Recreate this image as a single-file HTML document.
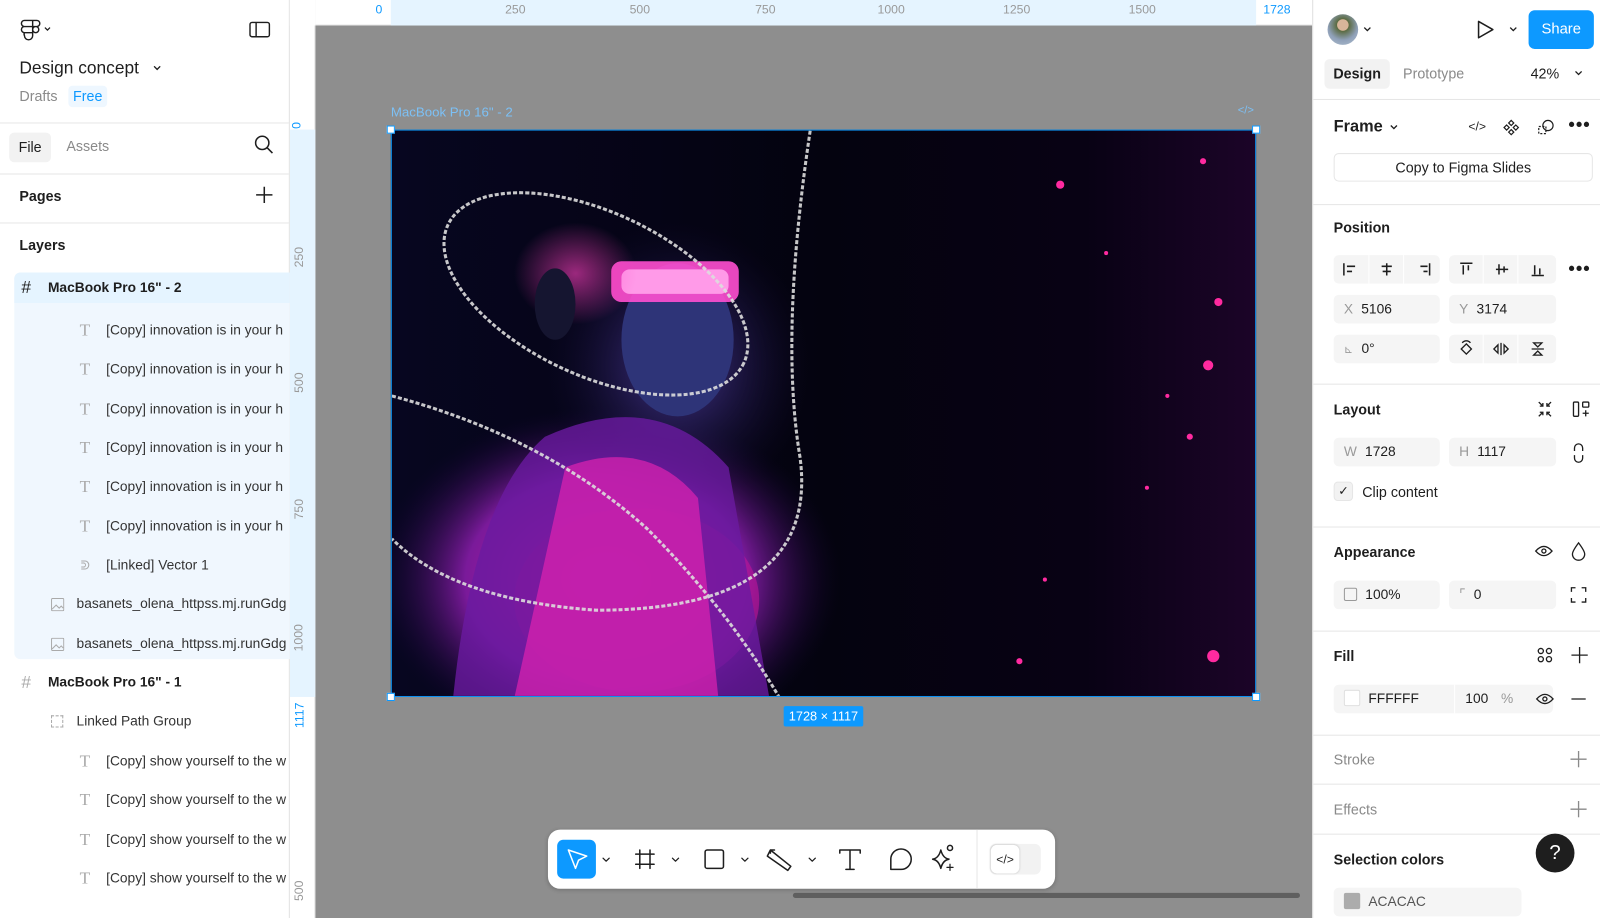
<!DOCTYPE html>
<html><head><meta charset="utf-8"><style>
*{box-sizing:border-box;margin:0;padding:0}
body{width:1600px;height:900px;overflow:hidden;font-family:"Liberation Sans",sans-serif;font-size:13px;color:#1e1e1e;background:#8e8e8e;position:relative}
#root{position:absolute;left:0;top:0;width:1568px;height:882px;transform:scale(1.020408);transform-origin:0 0}
.abs{position:absolute}
#left{left:0;top:0;width:284px;height:900px;background:#fff;border-right:1px solid #e6e6e6}
#right{left:1286px;top:0;width:314px;height:900px;background:#fff;border-left:1px solid #e6e6e6}
.hr{position:absolute;left:0;right:0;height:1px;background:#e6e6e6}
.lay{position:absolute;left:0;width:284px;height:38px;line-height:38px;font-size:13.5px;color:#333;white-space:nowrap;overflow:hidden}
.tI{position:absolute;color:#aaa;font-family:"Liberation Serif",serif;font-size:17px}
.sec{position:absolute;left:20px;font-size:14px;font-weight:bold;color:#1e1e1e}
.fld{position:absolute;background:#f5f5f5;border-radius:5px;height:28px;line-height:28px;font-size:13.5px;padding-left:10px}
.fld b{font-weight:normal;color:#999;margin-right:8px}
.ico{position:absolute}
</style></head><body><div id="root">

<div class="abs" style="left:284px;top:0;width:1002px;height:25px;background:#fff;border-bottom:1px solid #e6e6e6"></div>
<div class="abs" style="left:383px;top:0;width:848px;height:25px;background:#e5f4ff"></div>
<div class="abs" style="left:284px;top:0;width:25px;height:900px;background:#fff;border-right:1px solid #e6e6e6"></div>
<div class="abs" style="left:284px;top:127px;width:25px;height:556px;background:#e5f4ff"></div>
<div class="abs" style="left:284px;top:0;width:25px;height:25px;background:#fff"></div>
<div class="abs" style="top:2px;left:0;font-size:12px;color:#999;width:1286px;height:20px">
<span class="abs" style="left:368px;color:#0d99ff">0</span>
<span class="abs" style="left:495px">250</span>
<span class="abs" style="left:617px">500</span>
<span class="abs" style="left:740px">750</span>
<span class="abs" style="left:860px">1000</span>
<span class="abs" style="left:983px">1250</span>
<span class="abs" style="left:1106px">1500</span>
<span class="abs" style="left:1238px;color:#0d99ff">1728</span>
</div>
<div class="abs" style="left:287px;top:0;width:20px;height:900px;font-size:12px;color:#999">
<span class="abs" style="top:116px;left:0;transform:rotate(-90deg);color:#0d99ff">0</span>
<span class="abs" style="top:245px;left:-4px;transform:rotate(-90deg)">250</span>
<span class="abs" style="top:368px;left:-4px;transform:rotate(-90deg)">500</span>
<span class="abs" style="top:492px;left:-4px;transform:rotate(-90deg)">750</span>
<span class="abs" style="top:618px;left:-8px;transform:rotate(-90deg)">1000</span>
<span class="abs" style="top:694px;left:-6px;transform:rotate(-90deg);color:#0d99ff">1117</span>
<span class="abs" style="top:866px;left:-4px;transform:rotate(-90deg)">500</span>
</div>

<div class="abs" style="left:383px;top:102px;font-size:13px;color:#7cc0f5">MacBook Pro 16" - 2</div>
<div class="abs" style="left:1213px;top:102px;font-size:11px;color:#7cc0f5">&lt;/&gt;</div>
<div class="abs" style="left:383px;top:127px;width:848px;height:556px;background:#03020c;overflow:hidden;border:1px solid #0d99ff">
<svg width="848" height="556" viewBox="0 0 848 556">
<defs>
<radialGradient id="g1" cx="0.5" cy="0.5" r="0.5"><stop offset="0" stop-color="#e01ca8"/><stop offset="0.6" stop-color="#7a1a9a"/><stop offset="1" stop-color="#100530" stop-opacity="0"/></radialGradient>
<radialGradient id="g2" cx="0.5" cy="0.5" r="0.5"><stop offset="0" stop-color="#4a3a98"/><stop offset="1" stop-color="#120a30" stop-opacity="0"/></radialGradient>
<radialGradient id="g3" cx="0.5" cy="0.5" r="0.5"><stop offset="0" stop-color="#ff40c0"/><stop offset="1" stop-color="#ff40c0" stop-opacity="0"/></radialGradient>
<linearGradient id="bg" x1="0" x2="1"><stop offset="0" stop-color="#070620"/><stop offset="0.5" stop-color="#04030f"/><stop offset="0.8" stop-color="#080214"/><stop offset="1" stop-color="#1c0428"/></linearGradient>
</defs>
<rect width="848" height="556" fill="url(#bg)"/>
<ellipse cx="210" cy="440" rx="230" ry="170" fill="url(#g1)"/>
<ellipse cx="280" cy="230" rx="130" ry="140" fill="url(#g2)"/>
<ellipse cx="240" cy="460" rx="120" ry="90" fill="#c0169a" opacity="0.6"/>
<ellipse cx="280" cy="205" rx="55" ry="75" fill="#2e3478"/>
<path d="M150 300 Q260 250 330 330 L370 556 L60 556 Q80 360 150 300Z" fill="#6a1aa0" opacity="0.8"/>
<path d="M170 330 Q250 300 300 360 L320 556 L120 556Z" fill="#e022b0" opacity="0.7"/>
<rect x="215" y="128" width="125" height="40" rx="10" fill="#ff4fd0" opacity="0.9"/>
<rect x="225" y="136" width="105" height="24" rx="8" fill="#ff9ae8"/>
<ellipse cx="180" cy="140" rx="60" ry="50" fill="url(#g3)" opacity="0.6"/>
<ellipse cx="160" cy="170" rx="20" ry="35" fill="#151530"/>
<g fill="none" stroke="#ddd" stroke-width="3" stroke-dasharray="4 2" opacity="0.9">
<ellipse cx="200" cy="160" rx="160" ry="80" transform="rotate(25 200 160)"/>
<path d="M410 0 Q380 200 400 320 Q420 470 200 470 Q60 460 0 400"/>
<path d="M0 260 Q150 300 250 390 Q330 470 380 556"/>
</g>
<g fill="#ff2aa0">
<circle cx="800" cy="230" r="5"/><circle cx="810" cy="168" r="4"/><circle cx="805" cy="515" r="6"/><circle cx="655" cy="53" r="4"/><circle cx="782" cy="300" r="3"/><circle cx="795" cy="30" r="3"/><circle cx="700" cy="120" r="2"/><circle cx="760" cy="260" r="2"/><circle cx="640" cy="440" r="2"/><circle cx="615" cy="520" r="3"/><circle cx="740" cy="350" r="2"/>
</g>
</svg>
</div>
<div class="abs" style="left:379px;top:123px;width:8px;height:8px;background:#fff;border:1px solid #0d99ff"></div>
<div class="abs" style="left:1227px;top:123px;width:8px;height:8px;background:#fff;border:1px solid #0d99ff"></div>
<div class="abs" style="left:379px;top:679px;width:8px;height:8px;background:#fff;border:1px solid #0d99ff"></div>
<div class="abs" style="left:1227px;top:679px;width:8px;height:8px;background:#fff;border:1px solid #0d99ff"></div>
<div class="abs" style="left:768px;top:692px;width:78px;height:20px;background:#0d99ff;color:#fff;font-size:12.5px;line-height:20px;text-align:center;border-radius:2px">1728 × 1117</div>

<div class="abs" style="left:777px;top:875px;width:497px;height:5px;background:#5f5f5f;border-radius:3px"></div>

<div class="abs" style="left:537px;top:813px;width:497px;height:58px;background:#fff;border-radius:12px;box-shadow:0 1px 4px rgba(0,0,0,.2)">
<div class="abs" style="left:9px;top:10px;width:38px;height:38px;background:#0d99ff;border-radius:6px"></div>
<svg class="abs" style="left:0;top:0" width="497" height="58" fill="none" stroke="#1e1e1e" stroke-width="1.5" stroke-linecap="round" stroke-linejoin="round">
<path d="M20 20 L38 26 L30 30 L27 38Z" stroke="#fff"/>
<path d="M54 28 l3 3 3-3 M122 28 l3 3 3-3 M190 28 l3 3 3-3 M256 28 l3 3 3-3" stroke-width="1.2"/>
<path d="M90 20 v18 M100 20 v18 M86 24 h18 M86 34 h18"/>
<rect x="154" y="20" width="18" height="18" rx="2"/>
<path d="M218 20 l20 16 l-3 4 l-20 -14 z M222 20 l-4 0 l0 3"/>
<path d="M286 20 h20 M296 20 v19 M292 39 h8 M286 20 v3 M306 20 v3"/>
<path d="M336 39 h10 a10 10 0 1 0 -10 -10 z"/>
<path d="M385 20 q2 8 8 9 q-6 1 -8 9 q-2 -8 -8 -9 q6 -1 8 -9z"/><circle cx="394" cy="18" r="2.5"/><path d="M394 34 v6 M391 37 h6" stroke-width="1.2"/>
</svg>
<div class="abs" style="left:420px;top:0;width:1px;height:58px;background:#e6e6e6"></div>
<div class="abs" style="left:433px;top:14px;width:50px;height:30px;background:#f2f2f2;border-radius:6px"></div>
<div class="abs" style="left:434px;top:15px;width:28px;height:28px;background:#fff;border-radius:6px;box-shadow:0 0 2px rgba(0,0,0,.2);font-size:12px;line-height:28px;text-align:center">&lt;/&gt;</div>
</div>

<div id="left" class="abs">
<svg class="ico" style="left:20px;top:18px" width="34" height="22" fill="none" stroke="#1e1e1e" stroke-width="1.4"><path d="M4 2h8v6H4a3 3 0 0 1 0-6zM12 2h4a3 3 0 0 1 0 6h-4zM4 8h8v6H4a3 3 0 0 1 0-6zM12 11a3 3 0 1 0 6 0 3 3 0 1 0-6 0M4 14h8v3a3 3 0 1 1-8-0a3 3 0 0 1 0-3z"/><path d="M24 9l2.5 2.5L29 9" stroke-width="1.2"/></svg>
<svg class="ico" style="left:244px;top:20px" width="22" height="18" fill="none" stroke="#1e1e1e" stroke-width="1.4"><rect x="1" y="2" width="19" height="14" rx="2"/><path d="M7 2v14"/></svg>
<div class="abs" style="left:19px;top:57px;font-size:17px;color:#1e1e1e">Design concept</div>
<svg class="ico" style="left:150px;top:63px" width="10" height="8" fill="none" stroke="#1e1e1e" stroke-width="1.3"><path d="M1 2l3 3 3-3"/></svg>
<div class="abs" style="left:19px;top:86px;font-size:14px;color:#8a8a8a">Drafts</div>
<div class="abs" style="left:67px;top:84px;width:38px;height:21px;background:#eef7ff;border-radius:4px;font-size:14px;color:#0d99ff;text-align:center;line-height:21px">Free</div>
<div class="hr" style="top:120px"></div>
<div class="abs" style="left:9px;top:130px;width:41px;height:29px;background:#f2f2f2;border-radius:5px;font-size:14px;line-height:29px;text-align:center">File</div>
<div class="abs" style="left:65px;top:135px;font-size:14px;color:#8a8a8a">Assets</div>
<svg class="ico" style="left:249px;top:132px" width="20" height="20" fill="none" stroke="#1e1e1e" stroke-width="1.5"><circle cx="8" cy="8" r="6.5"/><path d="M13 13l5 5"/></svg>
<div class="hr" style="top:170px"></div>
<div class="sec" style="top:184px;left:19px">Pages</div>
<svg class="ico" style="left:250px;top:182px" width="18" height="18" stroke="#1e1e1e" stroke-width="1.5"><path d="M9 1v16M1 9h16"/></svg>
<div class="hr" style="top:218px"></div>
<div class="sec" style="top:232px;left:19px">Layers</div>
<div class="abs" style="left:14px;top:267px;width:270px;height:379px;background:#f0f7fe;border-radius:6px 0 0 6px"></div>
<div class="abs" style="left:14px;top:267px;width:270px;height:30px;background:#e5f4ff;border-radius:6px 0 0 0"></div>
<div class="lay" style="top:263px;font-weight:bold;color:#1e1e1e"><span style="position:absolute;left:21px;font-weight:normal;font-size:17px">#</span><span style="position:absolute;left:47px">MacBook Pro 16" - 2</span></div>
<div class="lay" style="top:305px"><span class="tI" style="left:78px">T</span><span style="position:absolute;left:104px">[Copy] innovation is in your h</span></div>
<div class="lay" style="top:343px"><span class="tI" style="left:78px">T</span><span style="position:absolute;left:104px">[Copy] innovation is in your h</span></div>
<div class="lay" style="top:382px"><span class="tI" style="left:78px">T</span><span style="position:absolute;left:104px">[Copy] innovation is in your h</span></div>
<div class="lay" style="top:420px"><span class="tI" style="left:78px">T</span><span style="position:absolute;left:104px">[Copy] innovation is in your h</span></div>
<div class="lay" style="top:458px"><span class="tI" style="left:78px">T</span><span style="position:absolute;left:104px">[Copy] innovation is in your h</span></div>
<div class="lay" style="top:497px"><span class="tI" style="left:78px">T</span><span style="position:absolute;left:104px">[Copy] innovation is in your h</span></div>
<div class="lay" style="top:535px"><span style="position:absolute;left:79px;color:#aaa;font-size:12px">ᕲ</span><span style="position:absolute;left:104px">[Linked] Vector 1</span></div>
<div class="lay" style="top:573px"><svg style="position:absolute;left:50px;top:13px" width="13" height="13" fill="none" stroke="#aaa"><rect x="0.5" y="0.5" width="12" height="12" rx="1"/><path d="M1 11l4-4 3 3 2-2 2 2"/></svg><span style="position:absolute;left:75px">basanets_olena_httpss.mj.runGdg</span></div>
<div class="lay" style="top:612px"><svg style="position:absolute;left:50px;top:13px" width="13" height="13" fill="none" stroke="#aaa"><rect x="0.5" y="0.5" width="12" height="12" rx="1"/><path d="M1 11l4-4 3 3 2-2 2 2"/></svg><span style="position:absolute;left:75px">basanets_olena_httpss.mj.runGdg</span></div>
<div class="lay" style="top:650px;font-weight:bold;color:#1e1e1e"><span style="position:absolute;left:21px;font-weight:normal;font-size:17px;color:#aaa">#</span><span style="position:absolute;left:47px">MacBook Pro 16" - 1</span></div>
<div class="lay" style="top:688px"><span style="position:absolute;left:50px;top:13px;width:12px;height:12px;border:1px dashed #aaa"></span><span style="position:absolute;left:75px">Linked Path Group</span></div>
<div class="lay" style="top:727px"><span class="tI" style="left:78px">T</span><span style="position:absolute;left:104px">[Copy] show yourself to the w</span></div>
<div class="lay" style="top:765px"><span class="tI" style="left:78px">T</span><span style="position:absolute;left:104px">[Copy] show yourself to the w</span></div>
<div class="lay" style="top:804px"><span class="tI" style="left:78px">T</span><span style="position:absolute;left:104px">[Copy] show yourself to the w</span></div>
<div class="lay" style="top:842px"><span class="tI" style="left:78px">T</span><span style="position:absolute;left:104px">[Copy] show yourself to the w</span></div>
</div>

<div id="right" class="abs">
<div class="abs" style="left:14px;top:14px;width:30px;height:30px;border-radius:50%;background:radial-gradient(circle at 50% 35%,#d8b59a 0 22%,#5a6a40 24%,#8fa0b8 60%,#b0c0d0)"></div>
<svg class="ico" style="left:49px;top:25px" width="10" height="8" fill="none" stroke="#1e1e1e" stroke-width="1.3"><path d="M1 2l3 3 3-3"/></svg>
<svg class="ico" style="left:159px;top:18px" width="20" height="22" fill="none" stroke="#1e1e1e" stroke-width="1.5" stroke-linejoin="round"><path d="M3 3l14 8-14 8z"/></svg>
<svg class="ico" style="left:192px;top:25px" width="10" height="8" fill="none" stroke="#1e1e1e" stroke-width="1.3"><path d="M1 2l3 3 3-3"/></svg>
<div class="abs" style="left:211px;top:10px;width:64px;height:38px;background:#0d99ff;border-radius:6px;color:#fff;font-size:14.5px;line-height:38px;text-align:center">Share</div>
<div class="abs" style="left:11px;top:58px;width:64px;height:29px;background:#f2f2f2;border-radius:5px;font-size:14px;font-weight:bold;line-height:29px;text-align:center">Design</div>
<div class="abs" style="left:88px;top:64px;font-size:14px;color:#8a8a8a">Prototype</div>
<div class="abs" style="left:213px;top:64px;font-size:14px">42%</div>
<svg class="ico" style="left:256px;top:68px" width="10" height="8" fill="none" stroke="#1e1e1e" stroke-width="1.3"><path d="M1 2l3 3 3-3"/></svg>
<div class="hr" style="top:97px"></div>
<div class="abs" style="left:20px;top:116px;font-size:16px;font-weight:bold">Frame</div>
<svg class="ico" style="left:75px;top:121px" width="10" height="8" fill="none" stroke="#1e1e1e" stroke-width="1.3"><path d="M1 2l3 3 3-3"/></svg>
<div class="abs" style="left:152px;top:117px;font-size:12px">&lt;/&gt;</div>
<svg class="ico" style="left:185px;top:116px" width="18" height="18" fill="none" stroke="#1e1e1e" stroke-width="1.2"><path d="M9 2l2.5 2.5L9 7 6.5 4.5zM9 11l2.5 2.5L9 16l-2.5-2.5zM4.5 6.5L7 9l-2.5 2.5L2 9zM13.5 6.5L16 9l-2.5 2.5L11 9z"/></svg>
<svg class="ico" style="left:219px;top:116px" width="18" height="18" fill="none" stroke="#1e1e1e" stroke-width="1.2"><circle cx="11" cy="7" r="5"/><rect x="2" y="8" width="7" height="7" stroke-dasharray="2 1.5"/></svg>
<div class="abs" style="left:250px;top:112px;font-size:18px;font-weight:bold;letter-spacing:1px">•••</div>
<div class="abs" style="left:20px;top:150px;width:254px;height:28px;border:1px solid #e6e6e6;border-radius:5px;font-size:14px;text-align:center;line-height:26px">Copy to Figma Slides</div>
<div class="hr" style="top:200px"></div>
<div class="sec" style="top:215px">Position</div>
<div class="fld" style="left:20px;top:250px;width:104px;padding:0"></div>
<div class="fld" style="left:133px;top:250px;width:105px;padding:0"></div>
<div class="abs" style="left:54px;top:250px;width:1px;height:28px;background:#fff"></div>
<div class="abs" style="left:88px;top:250px;width:1px;height:28px;background:#fff"></div>
<div class="abs" style="left:166px;top:250px;width:1px;height:28px;background:#fff"></div>
<div class="abs" style="left:200px;top:250px;width:1px;height:28px;background:#fff"></div>
<svg class="ico" style="left:20px;top:250px" width="220" height="28" fill="none" stroke="#1e1e1e" stroke-width="1.5"><path d="M10 8v12M13 11h8M13 16h5"/><path d="M52 8v12M47 11h10M48 16h8"/><path d="M94 8v12M85 11h7M88 16h4"/><path d="M124 8h12M127 10v9M132 10v5"/><path d="M159 14h12M162 9v10M167 11v6"/><path d="M194 20h12M197 10v9M202 13v6"/></svg>
<div class="abs" style="left:250px;top:253px;font-size:18px;font-weight:bold;letter-spacing:1px">•••</div>
<div class="fld" style="left:20px;top:289px;width:104px"><b>X</b>5106</div>
<div class="fld" style="left:133px;top:289px;width:105px"><b>Y</b>3174</div>
<div class="fld" style="left:20px;top:328px;width:104px"><b style="font-size:11px">⊾</b>0°</div>
<div class="fld" style="left:133px;top:328px;width:105px;padding:0"></div>
<div class="abs" style="left:166px;top:328px;width:1px;height:28px;background:#fff"></div>
<div class="abs" style="left:200px;top:328px;width:1px;height:28px;background:#fff"></div>
<svg class="ico" style="left:133px;top:328px" width="105" height="28" fill="none" stroke="#1e1e1e" stroke-width="1.3"><path d="M17 9l5 5-5 5-5-5zM13 8a5 5 0 0 1 8 0"/><path d="M51 8v12M48 10l-4 4 4 4zM54 10l4 4-4 4z"/><path d="M81 14h12M83 8h8l-4 4zM83 20h8l-4-4z"/></svg>
<div class="hr" style="top:376px"></div>
<div class="sec" style="top:393px">Layout</div>
<svg class="ico" style="left:218px;top:391px" width="60" height="20" fill="none" stroke="#1e1e1e" stroke-width="1.3"><path d="M3 3l4 4M7 4v3H4M15 3l-4 4M11 4v3h3M3 17l4-4M4 13h3v3M15 17l-4-4M14 13h-3v3"/><rect x="37" y="3" width="5" height="14" rx="1"/><rect x="46" y="3" width="6" height="5" rx="1"/><path d="M49 11v6M46 14h6"/></svg>
<div class="fld" style="left:20px;top:429px;width:104px"><b>W</b>1728</div>
<div class="fld" style="left:133px;top:429px;width:105px"><b>H</b>1117</div>
<svg class="ico" style="left:253px;top:434px" width="14" height="20" fill="none" stroke="#1e1e1e" stroke-width="1.3"><path d="M3 8V5a4 4 0 0 1 8 0v3M3 12v3a4 4 0 0 0 8 0v-3"/></svg>
<div class="abs" style="left:20px;top:472px;width:19px;height:19px;background:#f2f2f2;border:1px solid #e6e6e6;border-radius:4px;font-size:12px;text-align:center;line-height:17px">✓</div>
<div class="abs" style="left:48px;top:474px;font-size:14px">Clip content</div>
<div class="hr" style="top:516px"></div>
<div class="sec" style="top:533px">Appearance</div>
<svg class="ico" style="left:216px;top:530px" width="64" height="20" fill="none" stroke="#1e1e1e" stroke-width="1.3"><path d="M2 10q8-9 16 0q-8 9-16 0z"/><circle cx="10" cy="10" r="2"/><path d="M44 2q-6 8-6 11a6 6 0 0 0 12 0q0-3-6-11z"/></svg>
<div class="fld" style="left:20px;top:569px;width:104px"><b style="display:inline-block;width:13px;height:13px;border:1px solid #999;border-radius:2px;vertical-align:-2px"></b>100%</div>
<div class="fld" style="left:133px;top:569px;width:105px"><b>⌜</b>0</div>
<svg class="ico" style="left:252px;top:575px" width="16" height="16" fill="none" stroke="#1e1e1e" stroke-width="1.3"><path d="M1 5V1h4M11 1h4v4M15 11v4h-4M5 15H1v-4"/></svg>
<div class="hr" style="top:618px"></div>
<div class="sec" style="top:635px">Fill</div>
<svg class="ico" style="left:218px;top:632px" width="60" height="20" fill="none" stroke="#1e1e1e" stroke-width="1.3"><circle cx="5" cy="6" r="2.5"/><circle cx="13" cy="6" r="2.5"/><circle cx="5" cy="14" r="2.5"/><circle cx="13" cy="14" r="2.5"/><path d="M43 2v16M35 10h16"/></svg>
<div class="fld" style="left:20px;top:671px;width:215px"><b style="display:inline-block;width:16px;height:16px;background:#fff;border:1px solid #e0e0e0;border-radius:2px;vertical-align:-3px"></b>FFFFFF</div>
<div class="abs" style="left:138px;top:671px;width:1px;height:28px;background:#fff"></div>
<div class="abs" style="left:149px;top:677px;font-size:13.5px">100</div>
<div class="abs" style="left:184px;top:677px;font-size:13.5px;color:#999">%</div>
<svg class="ico" style="left:217px;top:675px" width="60" height="20" fill="none" stroke="#1e1e1e" stroke-width="1.3"><path d="M2 10q8-9 16 0q-8 9-16 0z"/><circle cx="10" cy="10" r="2"/><path d="M36 10h14"/></svg>
<div class="hr" style="top:720px"></div>
<div class="sec" style="top:736px;color:#8a8a8a;font-weight:normal">Stroke</div>
<svg class="ico" style="left:252px;top:736px" width="16" height="16" stroke="#8a8a8a" stroke-width="1.3"><path d="M8 0v16M0 8h16"/></svg>
<div class="hr" style="top:768px"></div>
<div class="sec" style="top:785px;color:#8a8a8a;font-weight:normal">Effects</div>
<svg class="ico" style="left:252px;top:785px" width="16" height="16" stroke="#8a8a8a" stroke-width="1.3"><path d="M8 0v16M0 8h16"/></svg>
<div class="hr" style="top:817px"></div>
<div class="sec" style="top:834px">Selection colors</div>
<div class="abs" style="left:218px;top:817px;width:38px;height:38px;border-radius:50%;background:#1e1e1e;color:#fff;font-size:20px;line-height:38px;text-align:center">?</div>
<div class="fld" style="left:20px;top:870px;width:184px;color:#555"><b style="display:inline-block;width:16px;height:16px;background:#acacac;border-radius:2px;vertical-align:-3px"></b>ACACAC</div>
</div>
</div></body></html>
